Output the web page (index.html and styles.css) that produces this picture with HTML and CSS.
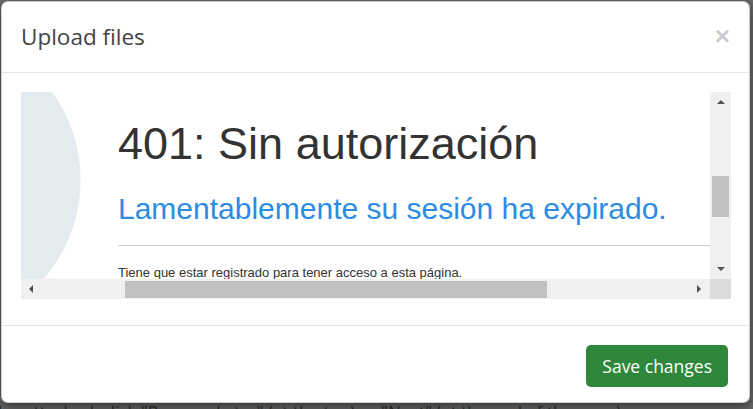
FILE: index.html
```html
<!DOCTYPE html>
<html lang="en">
<head>
    <meta charset="UTF-8">
    <meta name="viewport" content="width=device-width, initial-scale=1.0">
    <title>Upload files</title>
    <link rel="stylesheet" href="styles.css">
</head>
<body>
    <div class="modal">
        <div class="modal-header">
            <h4 class="modal-title">Upload files</h4>
            <button type="button" class="close">&times;</button>
        </div>
        <div class="modal-body">
            <div class="frame">
                <div class="frame-view">
                    <h1>401: Sin autorización</h1>
                    <h2>Lamentablemente su sesión ha expirado.</h2>
                    <hr>
                    <p>Tiene que estar registrado para tener acceso a esta página.</p>
                </div>
                <div class="vscroll">
                    <span class="arrow arrow-up"></span>
                    <div class="vtrack"><div class="vthumb"></div></div>
                    <span class="arrow arrow-down"></span>
                </div>
                <div class="hscroll">
                    <span class="arrow arrow-left"></span>
                    <div class="htrack"><div class="hthumb"></div></div>
                    <span class="arrow arrow-right"></span>
                </div>
                <div class="corner"></div>
            </div>
        </div>
        <div class="modal-footer">
            <button type="button" class="btn-save">Save changes</button>
        </div>
    </div>
    <p class="page-text">les attached, click "Resume Later" (at the top) or "Next" (at the end of the page)</p>
</body>
</html>
```

FILE: styles.css
```css
body {
    margin: 0;
    background: #686868;
    font-family: 'Open Sans', 'Noto Sans', sans-serif;
    overflow: hidden;
    height: 409px;
}

.modal {
    width: 747px;
    height: 400px;
    margin: 1px 0 0 1px;
    background: #fff;
    border: 1px solid rgba(0, 0, 0, 0.2);
    border-radius: 7px;
    box-shadow: 0 4px 12px rgba(0, 0, 0, 0.5);
    display: flex;
    flex-direction: column;
    overflow: hidden;
}

.modal-header {
    display: flex;
    justify-content: space-between;
    align-items: center;
    padding: 19px 19px 19px 19px;
    border-bottom: 1px solid #e5e5e5;
}

.modal-title {
    margin: 0;
    font-size: 22.5px;
    font-weight: 400;
    line-height: 32px;
    color: #444;
}

.close {
    border: none;
    background: none;
    padding: 0;
    font-family: 'Liberation Sans', Arial, sans-serif;
    font-size: 26px;
    font-weight: bold;
    line-height: 1;
    color: #000;
    opacity: 0.2;
    margin-top: -2px;
}

.modal-body {
    padding: 19px 19px 25px 19px;
}

.frame {
    display: grid;
    grid-template-columns: 689px 21px;
    grid-template-rows: 187px 20px;
    width: 710px;
}

.frame-view {
    overflow: hidden;
    padding: 26px 0 0 97px;
    background: radial-gradient(circle at -91px 88px, #e3ebef 150px, #fff 151px);
    font-family: 'Liberation Sans', Arial, sans-serif;
    white-space: nowrap;
}

.frame-view h1 {
    margin: 0;
    font-size: 45px;
    font-weight: 400;
    line-height: normal;
    color: #333;
}

.frame-view h2 {
    margin: 22px 0 0;
    font-size: 30px;
    font-weight: 400;
    line-height: normal;
    color: #2b8ce2;
}

.frame-view hr {
    margin: 19px 0 0;
    border: none;
    border-top: 1px solid #ccc;
}

.frame-view p {
    margin: 19px 0 0;
    font-size: 13px;
    color: #333;
}

.vscroll,
.hscroll {
    background: #f0f0f0;
    display: flex;
    align-items: center;
}

.vscroll {
    flex-direction: column;
}

.vtrack,
.htrack {
    flex: 1;
    align-self: stretch;
}

.vthumb {
    margin: 65px 2px 0;
    height: 41px;
    background: #c1c1c1;
}

.htrack {
    display: flex;
    align-items: center;
}

.hthumb {
    margin-left: 84px;
    width: 422px;
    height: 17px;
    background: #c1c1c1;
}

.arrow {
    width: 0;
    height: 0;
    flex-shrink: 0;
}

.arrow-up {
    margin: 8px 0 7px;
    border-left: 4px solid transparent;
    border-right: 4px solid transparent;
    border-bottom: 4px solid #505050;
}

.arrow-down {
    margin: 7px 0 8px;
    border-left: 4px solid transparent;
    border-right: 4px solid transparent;
    border-top: 4px solid #505050;
}

.arrow-left {
    margin: 0 8px 0 8px;
    border-top: 4px solid transparent;
    border-bottom: 4px solid transparent;
    border-right: 4px solid #505050;
}

.arrow-right {
    margin: 0 9px 0 7px;
    border-top: 4px solid transparent;
    border-bottom: 4px solid transparent;
    border-left: 4px solid #505050;
}

.corner {
    background: #dcdcdc;
}

.modal-footer {
    margin-top: auto;
    display: flex;
    justify-content: flex-end;
    padding: 19px 21px 15px;
    border-top: 1px solid #e5e5e5;
}

.btn-save {
    background: #2e873a;
    color: #fff;
    border: none;
    border-radius: 5px;
    font-family: 'Open Sans', 'Noto Sans', sans-serif;
    font-size: 17.5px;
    height: 42px;
    padding: 0 16px;
}

.page-text {
    margin: -1px 0 0 -2px;
    font-family: 'Open Sans', 'Noto Sans', sans-serif;
    font-size: 17px;
    line-height: 20px;
    color: #222;
    white-space: nowrap;
}
```
